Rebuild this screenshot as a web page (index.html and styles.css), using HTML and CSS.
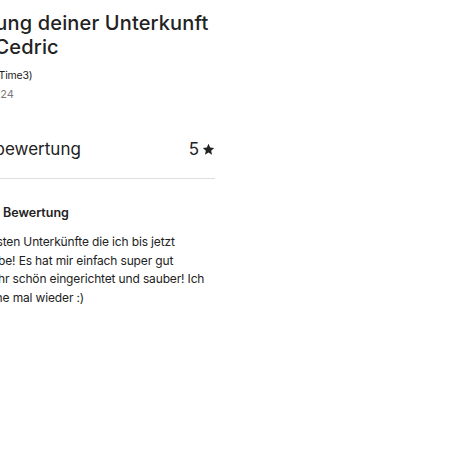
FILE: index.html
```html
<!DOCTYPE html>
<html lang="de">
<head>
    <meta charset="UTF-8">
    <meta name="viewport" content="width=device-width, initial-scale=1.0">
    <title>Bewertung</title>
    <link rel="stylesheet" href="styles.css">
</head>
<body>
    <div class="review">
        <h1>Bewertung deiner Unterkunft<br>durch Cedric</h1>
        <p class="guest">Gast: Cedric (Time3)</p>
        <p class="date">15. März 2024</p>

        <div class="rating-row">
            <span class="label">Gesamtbewertung</span>
            <span class="score">5
                <svg class="star" viewBox="0 0 24 24" width="13" height="13" aria-hidden="true">
                    <path d="M12 1.5l3.1 6.9 7.4.7-5.6 5 1.7 7.4L12 17.6l-6.6 3.9 1.7-7.4-5.6-5 7.4-.7z" fill="#222222"/>
                </svg>
            </span>
        </div>

        <h2>Öffentliche Bewertung</h2>
        <p class="text">Eine der besten Unterkünfte die ich bis jetzt<br>gemietet habe! Es hat mir einfach super gut<br>gefallen. Sehr schön eingerichtet und sauber! Ich<br>komme gerne mal wieder :)</p>
    </div>
</body>
</html>
```

FILE: styles.css
```css
body {
    margin: 0;
    background-color: white;
    font-family: Inter, "Noto Sans", sans-serif;
    color: #222222;
    overflow: hidden;
}

.review {
    width: 282px;
    margin-left: -67px;
    padding-top: 11px;
}

h1 {
    font-size: 20px;
    font-weight: 500;
    line-height: 24px;
    margin: 0 0 8px 0;
    letter-spacing: 0.15px;
    white-space: nowrap;
    text-indent: -6px;
}

.guest {
    font-size: 10.5px;
    letter-spacing: -0.2px;
    margin: 0;
    line-height: 18px;
}

.date {
    font-size: 11px;
    color: #7a7a7a;
    margin: 0;
    line-height: 18px;
    text-indent: 7px;
}

.rating-row {
    display: flex;
    justify-content: space-between;
    align-items: center;
    font-size: 17px;
    margin-top: 36px;
    padding-bottom: 19px;
    border-bottom: 1px solid #dddddd;
}

.score {
    display: flex;
    align-items: center;
    gap: 3px;
}

h2 {
    font-size: 12.5px;
    font-weight: 600;
    margin: 26px 0 13px 0;
}

.text {
    font-size: 12px;
    line-height: 18.7px;
    letter-spacing: -0.15px;
    margin: 0;
    text-indent: 1px;
}
```
